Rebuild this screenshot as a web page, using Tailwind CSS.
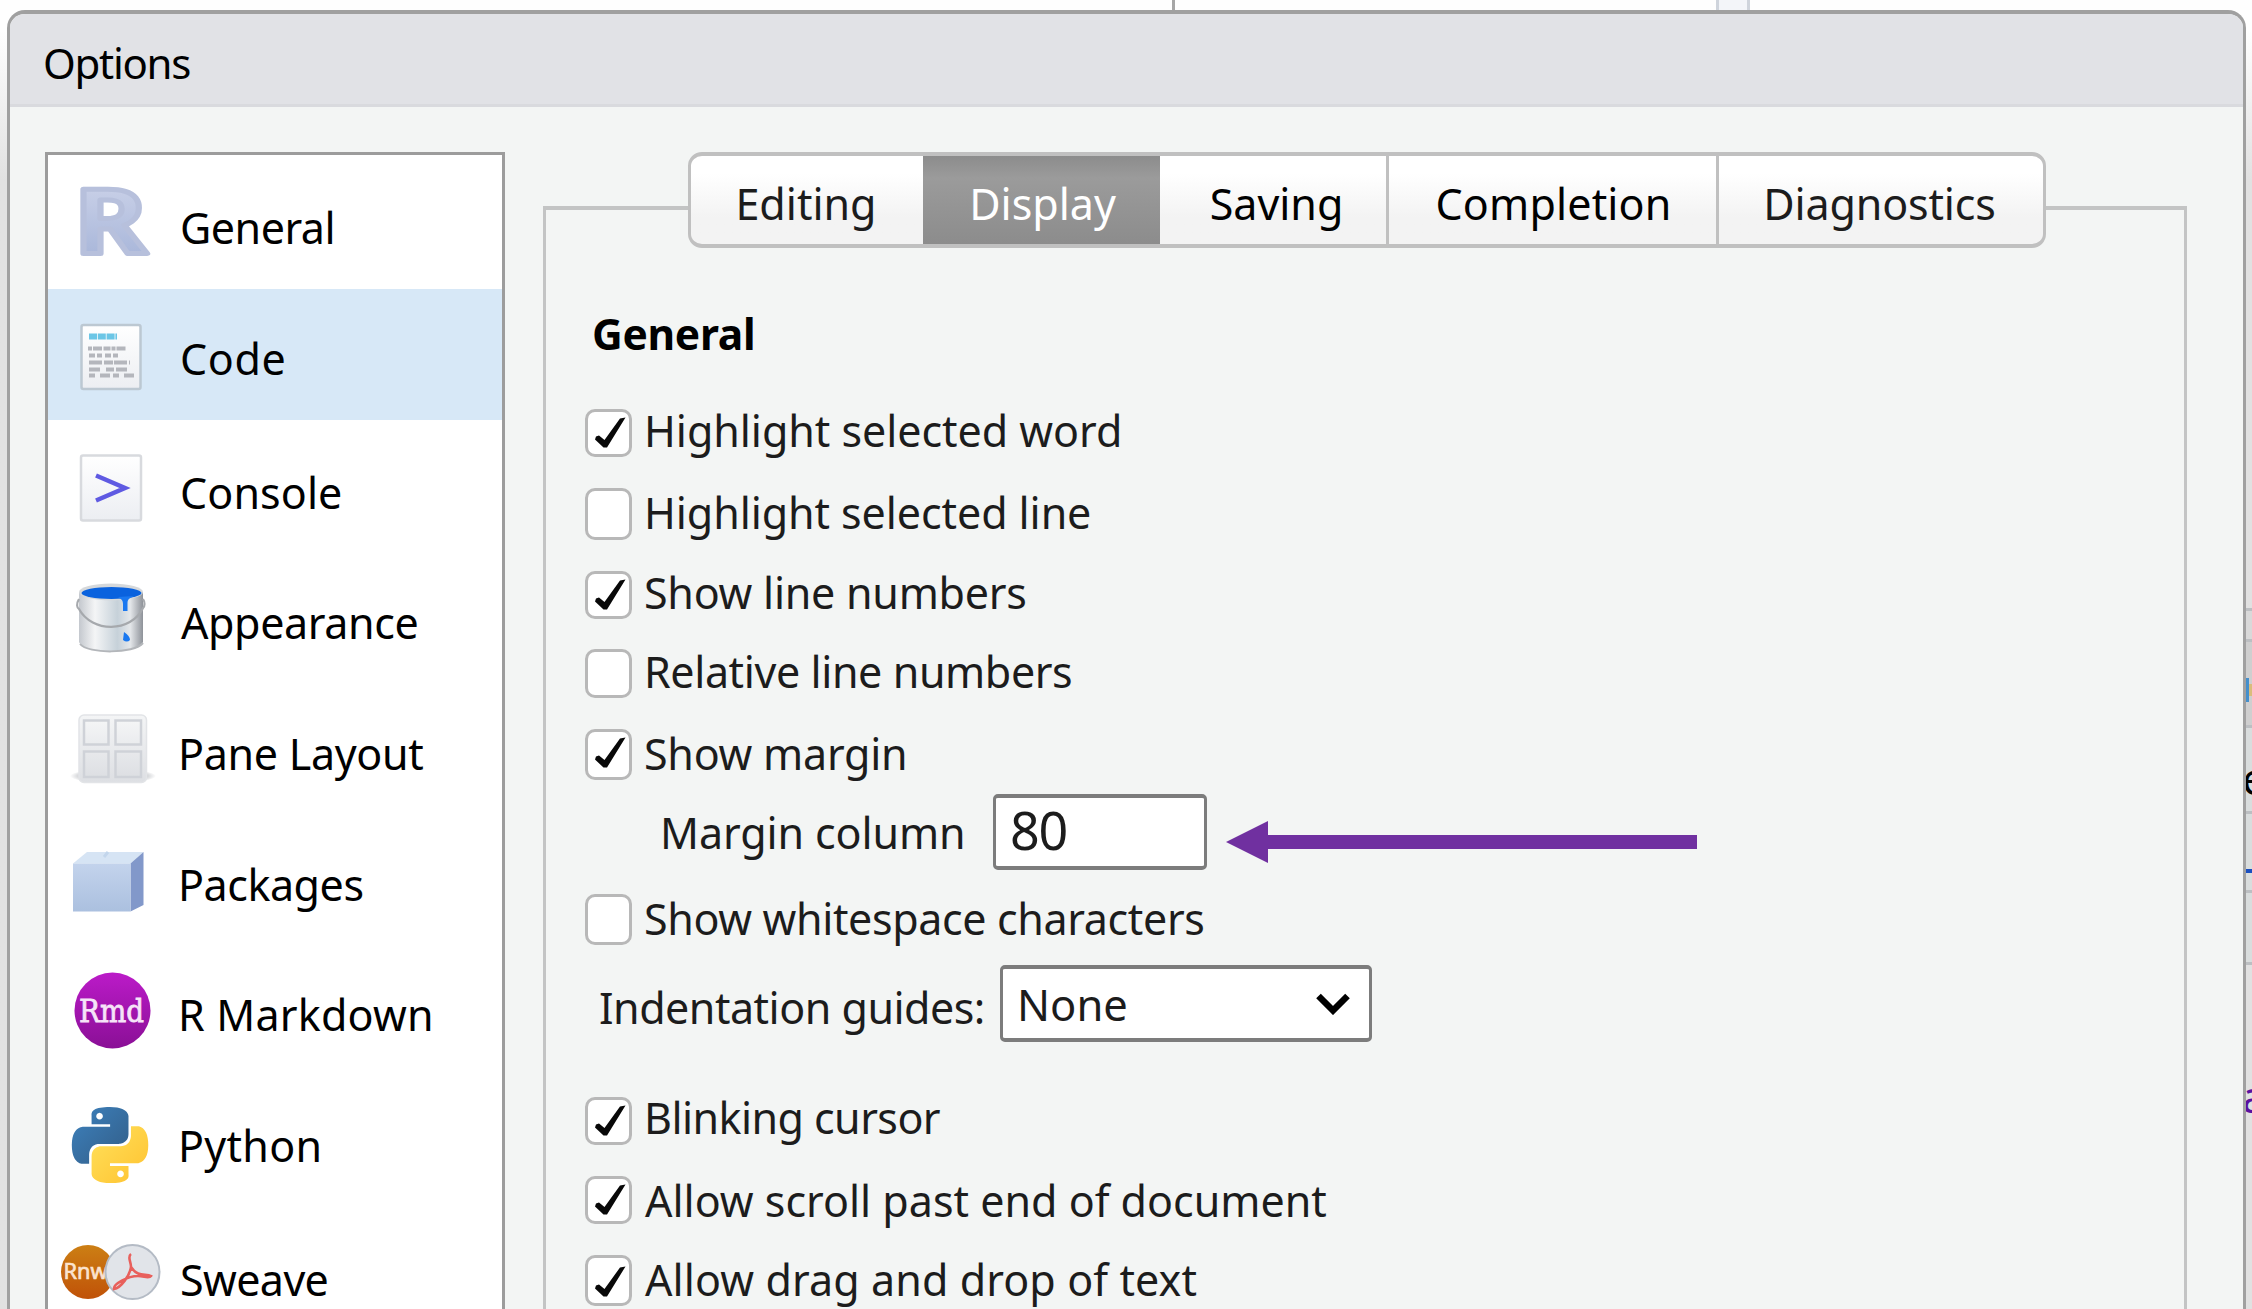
<!DOCTYPE html>
<html lang="en">
<head>
<meta charset="utf-8">
<title>Options</title>
<script src="https://cdn.jsdelivr.net/npm/@tailwindcss/browser@4"></script>
</head>
<body class="h-screen w-screen overflow-hidden bg-white font-['Noto_Sans','Open_Sans',sans-serif] text-[43px] leading-[60px] text-black whitespace-nowrap">
<div class="flex h-screen flex-col overflow-hidden">

  <!-- window behind the dialog: top edge -->
  <div class="flex h-[10px] shrink-0 bg-[#fefefe]">
    <div class="w-[1175px] border-r-[3px] border-[#a6a6a6]"></div>
    <div class="ml-[541px] w-[34px] border-x-[3px] border-[#cfd4dc] bg-[#f3f5f9]"></div>
  </div>

  <div class="flex min-h-0 grow">
    <div class="w-[7px] shrink-0 bg-linear-to-b from-white from-[20px] to-[#e1e1e1] to-[170px]"></div>

    <!-- dialog -->
    <div class="flex h-[1340px] w-[2239px] shrink-0 flex-col overflow-hidden rounded-t-[18px] border-x-[3px] border-t-4 border-[#a0a0a0] bg-[#f3f5f4]">
      <div class="flex h-[93px] shrink-0 items-center border-b-[3px] border-[#d9dade] bg-[#e1e2e6] pt-[8px] pl-[33px]">
        <span class="text-[42px] tracking-[-1.3px]">Options</span>
      </div>

      <div class="flex grow items-start pl-[35px]">
        <!-- section chooser -->
        <nav class="mt-[45px] flex h-[1220px] w-[460px] shrink-0 flex-col border-[3px] border-[#9c9c9c] bg-white">
          <div class="flex h-[134px] shrink-0">
            <svg class="w-[130px] shrink-0" viewBox="48 155 130 134">
              <defs><linearGradient id="r" x1="0" y1="0" x2="0" y2="1"><stop offset=".2" stop-color="#cad1e8"/><stop offset=".8" stop-color="#a9b7da"/></linearGradient></defs>
              <text x="74" y="254" font-family="Noto Sans" font-weight="700" font-size="90" textLength="73" lengthAdjust="spacingAndGlyphs" fill="url(#r)" stroke="#b7c0dc" stroke-width="5" stroke-linejoin="round">R</text>
            </svg>
            <span class="mt-[43px] ml-[2px] tracking-[-0.5px]">General</span>
          </div>
          <div class="flex h-[131px] shrink-0 bg-[#d7e8f7]">
            <svg class="w-[130px] shrink-0" viewBox="48 289 130 131">
              <defs><linearGradient id="pg" x1="0" y1="0" x2="0" y2="1"><stop offset="0" stop-color="#fff"/><stop offset="1" stop-color="#eceef2"/></linearGradient></defs>
              <rect x="81.500" y="325" width="59" height="64" rx="2" fill="url(#pg)" stroke="#bcc8d2" stroke-width="2.500"/>
              <path d="M89 336.500h28" stroke="#6cc6e6" stroke-width="6" stroke-dasharray="8 .8"/>
              <g stroke="#b4b6bc" stroke-width="4">
                <path d="M88 348.500h38" stroke-dasharray="4 1 9 1.500 7 1"/><path d="M89 355.500h30" stroke-dasharray="6 2 5 3"/>
                <path d="M89 362.500h41" stroke-dasharray="13 2 9 1"/><path d="M89 369.500h40" stroke-dasharray="11 6 8 2"/><path d="M89 375.500h46" stroke-dasharray="6 5 10 3"/>
              </g>
            </svg>
            <span class="mt-[40px] ml-[2px] tracking-[0.6px]">Code</span>
          </div>
          <div class="flex h-[131px] shrink-0">
            <svg class="w-[130px] shrink-0" viewBox="48 420 130 131">
              <rect x="81" y="455.500" width="60" height="65" rx="2" fill="url(#pg)" stroke="#d8dade" stroke-width="2.500"/>
              <path d="M96 475.500L125 488L96 500.500" fill="none" stroke="#5f5ae2" stroke-width="4.500"/>
            </svg>
            <span class="mt-[43px] ml-[2px] tracking-[0.1px]">Console</span>
          </div>
          <div class="flex h-[131px] shrink-0">
            <svg class="w-[130px] shrink-0" viewBox="48 551 130 131">
              <defs><linearGradient id="bk"><stop offset="0" stop-color="#c4c8ce"/><stop offset=".25" stop-color="#f4f5f6"/><stop offset=".6" stop-color="#c6d1d9"/><stop offset=".8" stop-color="#e4e7ea"/><stop offset="1" stop-color="#8e9299"/></linearGradient></defs>
              <path d="M79 592V642C83 654 139 654 143 642V592Z" fill="url(#bk)"/>
              <path d="M80 644C88 654 134 654 143 643" fill="none" stroke="#b3b6ba" stroke-width="2"/>
              <ellipse cx="111" cy="592" rx="32" ry="8.500" fill="#d5d8db"/>
              <ellipse cx="111.500" cy="593" rx="30" ry="6" fill="#0a62de"/>
              <path d="M118 597C121 599 123 600 123 604V611H127.500V603C127.500 599 130 598 134 596Z" fill="#1a78f0"/>
              <path d="M79 599C76 604 77 608 79 609C92 633 131 633 143 608C145 606 145 602 143 599" fill="none" stroke="#a6a9ad" stroke-width="2.200"/>
              <path d="M124 632Q130 636 130 640Q127 643 123 640Z" fill="#1a78f0"/>
            </svg>
            <span class="mt-[42px] ml-[3px] tracking-[-0.4px]">Appearance</span>
          </div>
          <div class="flex h-[131px] shrink-0">
            <svg class="w-[130px] shrink-0" viewBox="48 682 130 131">
              <defs><linearGradient id="pn" x1="0" y1="0" x2="0" y2="1"><stop offset="0" stop-color="#f4f5f6"/><stop offset="1" stop-color="#dddfe3"/></linearGradient>
              <radialGradient id="sh"><stop offset=".6" stop-color="#a9acb2"/><stop offset="1" stop-color="#fff"/></radialGradient></defs>
              <ellipse cx="113" cy="776" rx="43" ry="7.500" fill="url(#sh)"/>
              <rect x="79" y="715" width="67.500" height="67.500" rx="5" fill="url(#pn)" stroke="#e2e4e7" stroke-width="1.500"/>
              <g fill="url(#pn)" stroke="#cfd2d8" stroke-width="2.500"><path d="M84 720.500h24.500v24H84zM115.500 720.500H141v24h-25.500zM84 751.500h24.500V777H84zM115.500 751.500H141V777h-25.500z"/></g>
            </svg>
            <span class="mt-[42px] tracking-[-0.3px]">Pane Layout</span>
          </div>
          <div class="flex h-[131px] shrink-0">
            <svg class="w-[130px] shrink-0" viewBox="48 813 130 131">
              <defs><linearGradient id="bx" x1="0" y1="0" x2="0" y2="1"><stop offset="0" stop-color="#c3d3ec"/><stop offset="1" stop-color="#abc0df"/></linearGradient></defs>
              <path d="M73 863.500L87 852H143.500L130.500 863.500Z" fill="#d6e4f4"/>
              <path d="M104 857L108 852" stroke="#c3d6ec" stroke-width="3"/>
              <path d="M130.500 863.500L143.500 852V905L130.500 911.500Z" fill="#8298ca"/>
              <path d="M73 863.500H130.500V911.500H73Z" fill="url(#bx)"/>
            </svg>
            <span class="mt-[42px] tracking-[-0.45px]">Packages</span>
          </div>
          <div class="flex h-[131px] shrink-0">
            <svg class="w-[130px] shrink-0" viewBox="48 944 130 131">
              <defs><linearGradient id="rm" x1="0" y1="0" x2="0" y2="1"><stop offset="0" stop-color="#bb1bc8"/><stop offset="1" stop-color="#8a0f96"/></linearGradient></defs>
              <circle cx="112.500" cy="1010.500" r="38" fill="url(#rm)"/>
              <text x="79" y="1021.500" font-family="DejaVu Serif" font-weight="400" font-size="32" textLength="65" lengthAdjust="spacingAndGlyphs" fill="#f6e4f8" stroke="#f6e4f8" stroke-width=".8">Rmd</text>
            </svg>
            <span class="mt-[41px] tracking-[0.2px]">R Markdown</span>
          </div>
          <div class="flex h-[131px] shrink-0">
            <svg class="w-[130px] shrink-0" viewBox="48 1075 130 131">
              <defs><linearGradient id="pb" x1="0" y1="0" x2="1" y2="1"><stop offset=".1" stop-color="#3c7eb8"/><stop offset=".9" stop-color="#33608c"/></linearGradient>
              <linearGradient id="py" x1="1" y1="1" x2="0" y2="0"><stop offset=".1" stop-color="#ffde57"/><stop offset=".9" stop-color="#ffc534"/></linearGradient>
              <path id="snake" d="M14.250.180l.9.200.730.260.590.300.450.320.340.340.250.340.160.330.100.300.040.260.020.200-.010.130V8.500l-.050.630-.130.550-.210.460-.260.380-.300.310-.330.250-.350.190-.350.140-.330.100-.300.070-.260.040-.210.020H8.770l-.690.050-.590.140-.500.220-.410.270-.330.320-.270.350-.200.360-.150.370-.100.350-.070.320-.040.270-.020.210v3.060H3.170l-.210-.030-.280-.070-.320-.120-.350-.180-.360-.260-.360-.360-.350-.460-.320-.590-.280-.730-.210-.880-.140-1.050-.050-1.230.060-1.220.160-1.040.240-.870.320-.710.360-.570.400-.440.420-.330.420-.240.400-.160.360-.100.320-.050.240-.010h.160l.060.010h8.160v-.830H6.180l-.010-2.750-.020-.370.050-.340.110-.310.170-.280.250-.260.310-.230.380-.200.440-.180.510-.150.580-.120.640-.100.710-.060.770-.040.840-.020 1.270.050zm-6.300 1.980l-.230.330-.080.410.080.410.230.340.330.220.410.090.410-.090.330-.220.230-.340.080-.410-.080-.410-.230-.330-.330-.220-.410-.090-.410.090z"/></defs>
              <g transform="translate(72 1107) scale(3.170)"><use href="#snake" fill="url(#pb)"/><use href="#snake" fill="url(#py)" transform="rotate(180 12 12)"/></g>
            </svg>
            <span class="mt-[41px] tracking-[0.3px]">Python</span>
          </div>
          <div class="flex h-[131px] shrink-0">
            <svg class="w-[130px] shrink-0" viewBox="48 1206 130 131">
              <defs><linearGradient id="sw" x1="0" y1="0" x2="0" y2="1"><stop offset="0" stop-color="#cc7f14"/><stop offset="1" stop-color="#c05208"/></linearGradient></defs>
              <circle cx="88" cy="1272" r="27" fill="url(#sw)"/>
              <text x="63.500" y="1278.500" font-family="Noto Sans" font-size="22" textLength="44" lengthAdjust="spacingAndGlyphs" fill="#fbe3cf" stroke="#fbe3cf" stroke-width=".7">Rnw</text>
              <circle cx="132.500" cy="1272" r="27" fill="#e1e4e9" stroke="#b4bbc5" stroke-width="2"/>
              <path d="M131 1254C127 1257 131 1261 131 1267C130 1275 121 1288 114 1289C113 1284 128 1276 138 1276C144 1276 149 1279 151 1276C146 1273 138 1278 131 1267" fill="none" stroke="#e8605c" stroke-width="2.600"/>
            </svg>
            <span class="mt-[44px] ml-[2px] tracking-[-0.6px]">Sweave</span>
          </div>
        </nav>

        <!-- tabbed panel -->
        <main class="mt-[99px] ml-[38px] flex h-[1200px] w-[1644px] shrink-0 flex-col border-x-[3px] border-t-4 border-[#c3c4c4] text-[#1c1c1c]">
          <div class="-mt-[58px] ml-[142px] flex h-[96px] w-[1358px] shrink-0 overflow-hidden rounded-[14px] border-x-[3px] border-y-4 border-[#c0c0c0] bg-linear-to-b from-white from-20% to-[#f3f3f3] to-70% text-black">
            <div class="flex w-[232px] items-center justify-center pt-[8px] pr-[2px] text-[#1c1c1c]">Editing</div>
            <div class="flex w-[237px] items-center justify-center bg-linear-to-b from-[#8c8c8c] via-[#9b9b9b] via-25% to-[#8c8c8c] pt-[8px] pl-[2px] text-white">Display</div>
            <div class="flex w-[229px] items-center justify-center border-r-[3px] border-[#c0c0c0] pt-[8px] pl-[7px]">Saving</div>
            <div class="flex w-[330px] items-center justify-center border-r-[3px] border-[#c0c0c0] pt-[8px] pl-[2px] tracking-[0.15px]">Completion</div>
            <div class="flex grow items-center justify-center pt-[8px] pr-[3px] tracking-[-0.15px] text-[#1c1c1c]">Diagnostics</div>
          </div>

          <h2 class="mt-[56px] ml-[46px] h-[97px] shrink-0 font-bold tracking-[-0.3px] text-black text-[42.500px]">General</h2>

          <div class="flex flex-col pl-[39px]">
            <label class="flex h-[82px] items-start gap-[12px]"><span class="mt-[8px] flex h-[48px] w-[47px] items-center justify-center rounded-[10px] border-[3px] border-[#b8b8b8] bg-white"><svg class="h-[34px] w-[34px]" viewBox="0 0 34 34"><path d="M4 20.500L7 19.500L12.500 24L28 2.500L33.500 1.500L15 31.500H11.500L3 23.500Z" fill="#080808"/></svg></span><span class="tracking-[-0.04px]">Highlight selected word</span></label>
            <label class="flex h-[80px] items-start gap-[12px]"><span class="mt-[5px] h-[52px] w-[47px] rounded-[10px] border-[3px] border-[#b8b8b8] bg-white"></span><span class="tracking-[-0.08px]">Highlight selected line</span></label>
            <label class="flex h-[79px] items-start gap-[12px]"><span class="mt-[8px] flex h-[48px] w-[47px] items-center justify-center rounded-[10px] border-[3px] border-[#b8b8b8] bg-white"><svg class="h-[34px] w-[34px]" viewBox="0 0 34 34"><path d="M4 20.500L7 19.500L12.500 24L28 2.500L33.500 1.500L15 31.500H11.500L3 23.500Z" fill="#080808"/></svg></span><span class="tracking-[-0.25px]">Show line numbers</span></label>
            <label class="flex h-[82px] items-start gap-[12px]"><span class="mt-[7px] h-[49px] w-[47px] rounded-[10px] border-[3px] border-[#b8b8b8] bg-white"></span><span class="tracking-[-0.4px]">Relative line numbers</span></label>
            <label class="flex h-[67px] items-start gap-[12px]"><span class="mt-[5px] flex h-[51px] w-[47px] items-center justify-center rounded-[10px] border-[3px] border-[#b8b8b8] bg-white"><svg class="mb-[3px] h-[34px] w-[34px]" viewBox="0 0 34 34"><path d="M4 20.500L7 19.500L12.500 24L28 2.500L33.500 1.500L15 31.500H11.500L3 23.500Z" fill="#080808"/></svg></span><span class="tracking-[-0.25px]">Show margin</span></label>

            <div class="flex h-[98px] items-start pl-[75px]">
              <span class="mt-[12px] w-[333px] tracking-[-0.1px]">Margin column</span>
              <span class="mt-[3px] flex h-[76px] w-[214px] items-center rounded-[5px] border-x-[3px] border-y-4 border-[#7c7c7c] bg-white pb-[4px] pl-[14px] text-[52px] tracking-[-1.2px]">80</span>
              <svg class="mt-[30px] ml-[19px] h-[42px] w-[471px]" viewBox="0 0 471 42"><path d="M0 21L42 0V14H471V28H42V42Z" fill="#7030a0"/></svg>
            </div>

            <label class="flex h-[74px] items-start gap-[12px]"><span class="mt-[5px] h-[51px] w-[47px] rounded-[10px] border-[3px] border-[#b8b8b8] bg-white"></span><span class="tracking-[-0.36px]">Show whitespace characters</span></label>

            <div class="flex h-[125px] items-start pl-[14px]">
              <span class="mt-[15px] w-[401px] tracking-[-0.5px]">Indentation guides:</span>
              <span class="mt-[2px] flex h-[77px] w-[372px] items-center justify-between rounded-[5px] border-x-[3px] border-y-4 border-[#7c7c7c] bg-white pr-[19px] pl-[14px] text-[43.500px]">None<svg class="h-[22px] w-[34px]" viewBox="0 0 34 22"><path d="M2.500 3L17 17.500L31.500 3" fill="none" stroke="#000" stroke-width="6.500"/></svg></span>
            </div>

            <label class="flex h-[83px] items-start gap-[12px]"><span class="mt-[9px] flex h-[48px] w-[47px] items-center justify-center rounded-[10px] border-[3px] border-[#b8b8b8] bg-white"><svg class="h-[34px] w-[34px]" viewBox="0 0 34 34"><path d="M4 20.500L7 19.500L12.500 24L28 2.500L33.500 1.500L15 31.500H11.500L3 23.500Z" fill="#080808"/></svg></span><span class="tracking-[-0.55px]">Blinking cursor</span></label>
            <label class="flex h-[79px] items-start gap-[12px]"><span class="mt-[5px] flex h-[48px] w-[47px] items-center justify-center rounded-[10px] border-[3px] border-[#b8b8b8] bg-white"><svg class="h-[34px] w-[34px]" viewBox="0 0 34 34"><path d="M4 20.500L7 19.500L12.500 24L28 2.500L33.500 1.500L15 31.500H11.500L3 23.500Z" fill="#080808"/></svg></span><span class="pl-[1px]">Allow scroll past end of document</span></label>
            <label class="flex h-[78px] items-start gap-[12px]"><span class="mt-[5px] flex h-[51px] w-[47px] items-center justify-center rounded-[10px] border-[3px] border-[#b8b8b8] bg-white"><svg class="mt-[2px] h-[34px] w-[34px]" viewBox="0 0 34 34"><path d="M4 20.500L7 19.500L12.500 24L28 2.500L33.500 1.500L15 31.500H11.500L3 23.500Z" fill="#080808"/></svg></span><span class="pl-[1px] tracking-[0.1px]">Allow drag and drop of text</span></label>
          </div>
        </main>
      </div>
    </div>

    <!-- window behind the dialog: right edge -->
    <div class="flex w-[6px] shrink-0 flex-col overflow-hidden bg-[#e1e1e1]">
      <div class="h-[601px] shrink-0 border-b-[3px] border-[#bcbfc2] bg-linear-to-b from-white from-[20px] to-[#e1e1e1] to-[170px]"></div>
      <div class="h-[31px] shrink-0 border-b-[3px] border-[#bcbfc2] bg-[#d9d9d9]"></div>
      <div class="flex h-[86px] shrink-0 items-center border-b-[3px] border-[#bcbfc2] bg-[#cfcfcf] pt-[24px] pb-[12px]"><span class="h-[24px] w-[3px] bg-[#4490cc]"></span><span class="h-[12px] w-[3px] bg-[#d9bd7c]"></span></div>
      <div class="h-[86px] shrink-0 overflow-hidden border-b-[3px] border-[#bcbfc2] bg-[#d9dddd]"><span class="-ml-[4px] mt-[21px] block">e</span></div>
      <div class="h-[79px] shrink-0 border-b-[3px] border-[#bcbfc2] bg-[#d9dddd] pt-[55px]"><div class="h-[4px] bg-[#1a4fc0]"></div></div>
      <div class="h-[72px] shrink-0 border-b-[3px] border-[#bcbfc2] bg-[#d9dddd]"></div>
      <span class="-ml-[4px] mt-[102px] block text-[#5a10a0]">a</span>
    </div>
  </div>
</div>
</body>
</html>
